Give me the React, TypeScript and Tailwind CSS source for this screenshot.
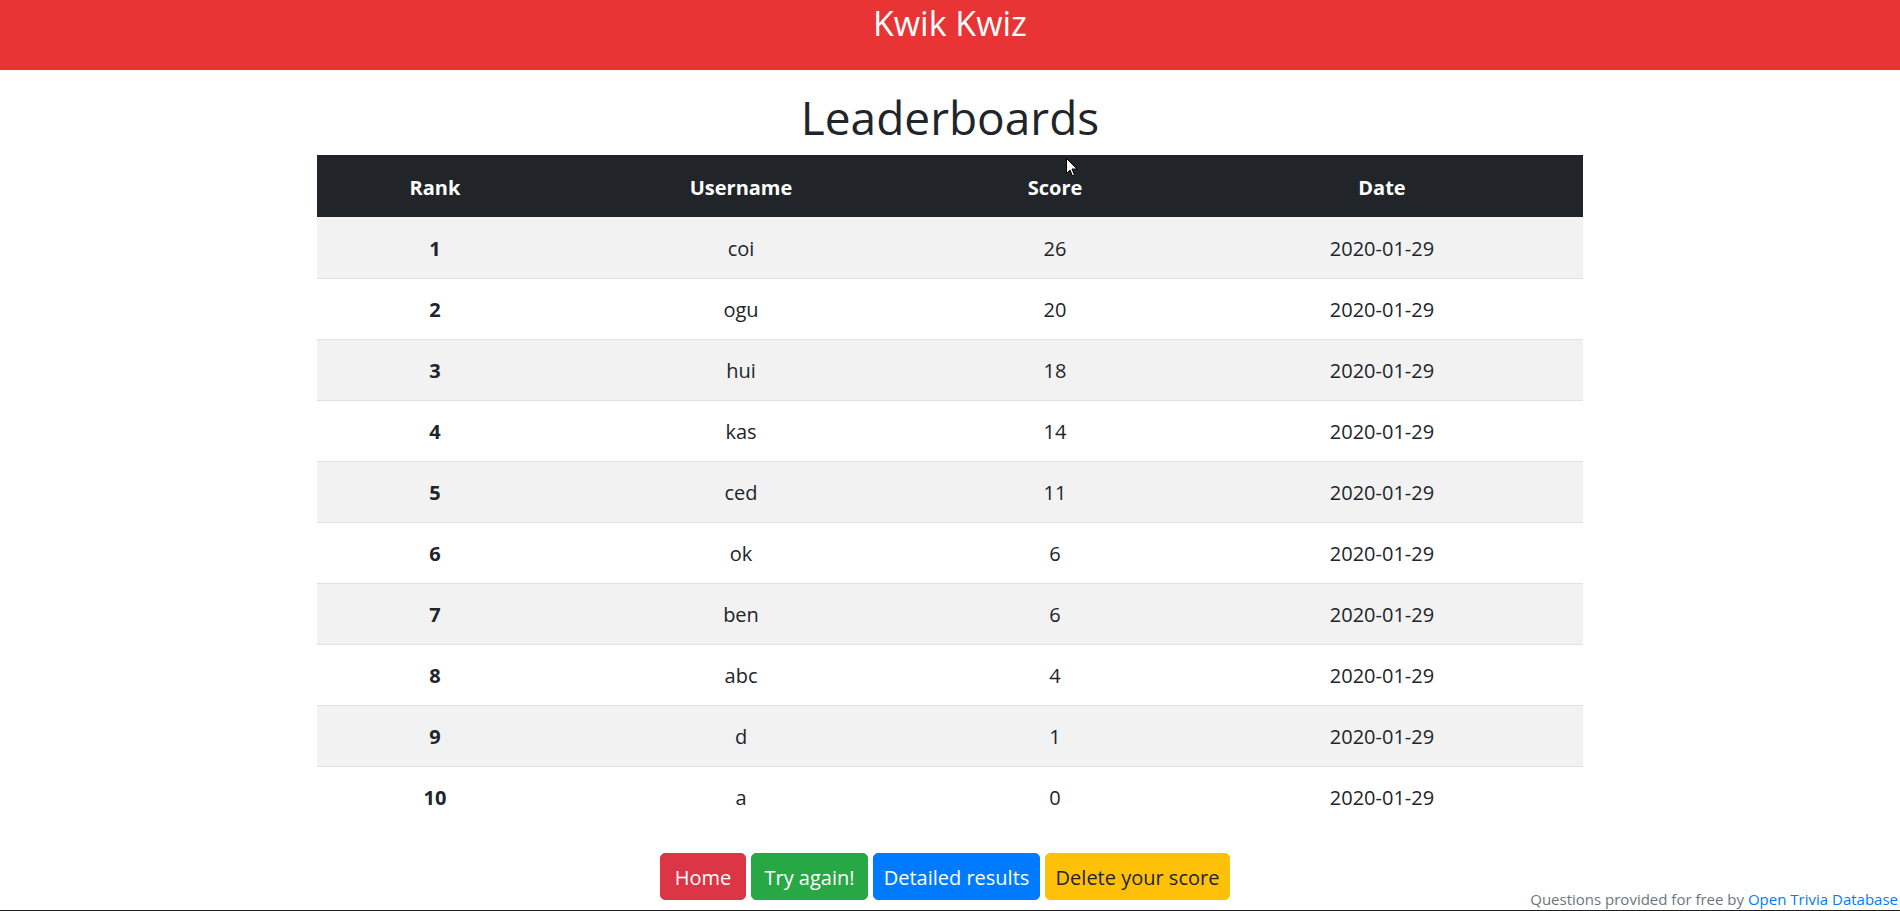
import React from 'react';

type Entry = { rank: number; username: string; score: number; date: string };

const entries: Entry[] = [
  { rank: 1, username: 'coi', score: 26, date: '2020-01-29' },
  { rank: 2, username: 'ogu', score: 20, date: '2020-01-29' },
  { rank: 3, username: 'hui', score: 18, date: '2020-01-29' },
  { rank: 4, username: 'kas', score: 14, date: '2020-01-29' },
  { rank: 5, username: 'ced', score: 11, date: '2020-01-29' },
  { rank: 6, username: 'ok', score: 6, date: '2020-01-29' },
  { rank: 7, username: 'ben', score: 6, date: '2020-01-29' },
  { rank: 8, username: 'abc', score: 4, date: '2020-01-29' },
  { rank: 9, username: 'd', score: 1, date: '2020-01-29' },
  { rank: 10, username: 'a', score: 0, date: '2020-01-29' },
];

const font = { fontFamily: '"Open Sans", "Noto Sans", sans-serif' };

export default function App() {
  return (
    <div className="relative min-h-[911px] bg-white text-[#212529] border-b border-[#1e1e1e]" style={font}>
      {/* Header */}
      <header className="h-[70px] bg-[#e83434] pt-[3px] text-center text-white">
        <span className="text-[34px] leading-[40px]">Kwik Kwiz</span>
      </header>

      <h1 className="mt-[19px] mb-[10px] text-center text-[46px] leading-[56px] font-normal">Leaderboards</h1>

      <table className="mx-auto w-[1266px] table-fixed border-collapse text-[20px] leading-[30px]">
        <colgroup>
          <col className="w-[236px]" />
          <col className="w-[376px]" />
          <col className="w-[252px]" />
          <col className="w-[402px]" />
        </colgroup>
        <thead>
          <tr className="h-[62px] bg-[#212529] text-white">
            <th className="pt-[3px] font-bold">Rank</th>
            <th className="pt-[3px] font-bold">Username</th>
            <th className="pt-[3px] font-bold">Score</th>
            <th className="pt-[3px] font-bold">Date</th>
          </tr>
        </thead>
        <tbody>
          {entries.map((e, i) => (
            <tr
              key={e.rank}
              className={`h-[61px] text-center ${i > 0 ? 'border-t border-[#dee2e6]' : ''} ${i % 2 === 0 ? 'bg-[#f2f2f2]' : 'bg-white'}`}
            >
              <th className="pt-[3px] font-bold">{e.rank}</th>
              <td className="pt-[3px]">{e.username}</td>
              <td className="pt-[3px]">{e.score}</td>
              <td className="pt-[3px]">{e.date}</td>
            </tr>
          ))}
        </tbody>
      </table>

      {/* Actions */}
      <div className="mt-[26px] flex justify-center gap-[5px] pr-[10px] text-[20px] leading-[30px]">
        <button className="w-[86px] rounded-[5px] border border-[#dc3545] bg-[#dc3545] pt-[8.5px] pb-[6.5px] text-white">Home</button>
        <button className="w-[117px] rounded-[5px] border border-[#28a745] bg-[#28a745] pt-[8.5px] pb-[6.5px] text-white">Try again!</button>
        <button className="w-[167px] rounded-[5px] border border-[#007bff] bg-[#007bff] pt-[8.5px] pb-[6.5px] text-white">Detailed results</button>
        <button className="w-[185px] rounded-[5px] border border-[#ffc107] bg-[#ffc107] pt-[8.5px] pb-[6.5px] text-[#212529]">Delete your score</button>
      </div>

      {/* Credits */}
      <div className="absolute right-[2px] bottom-[1px] text-[15px] leading-[20px] text-[#6c757d]">
        Questions provided for free by <a className="text-[#007bff]">Open Trivia Database</a>
      </div>

      {/* Mouse pointer */}
      <svg className="absolute left-[1066px] top-[158px]" width="12" height="19" viewBox="0 0 12 19">
        <path d="M0.5 0.5 L0.5 15.5 L4 12 L6.5 18 L8.5 17 L6 11 L11 11 Z" fill="white" stroke="black" strokeWidth="1" />
      </svg>
    </div>
  );
}
